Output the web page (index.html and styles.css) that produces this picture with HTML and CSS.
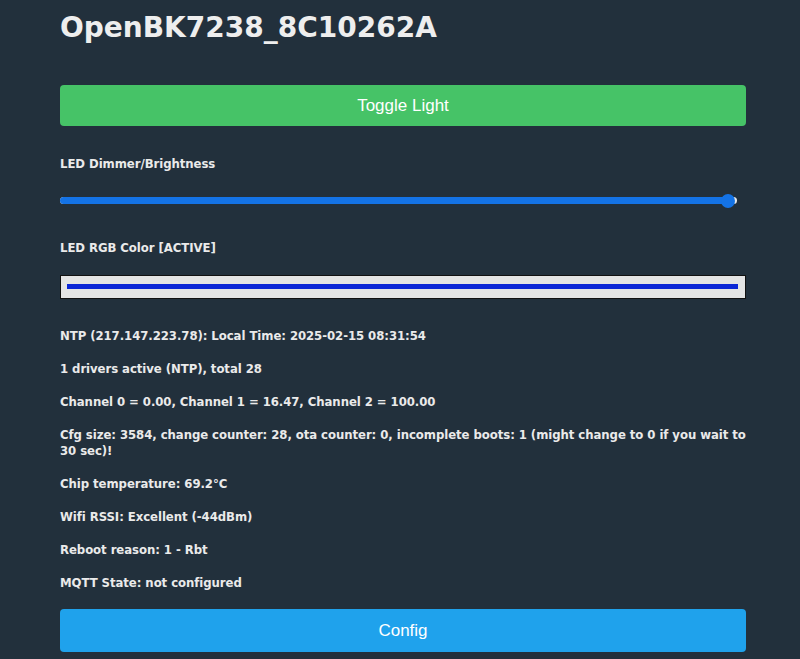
FILE: index.html
```html
<!DOCTYPE html>
<html>
<head>
<meta charset="utf-8">
<link rel="stylesheet" href="styles.css">
</head>
<body>
<div class="page">
  <h1 class="title">OpenBK7238_8C10262A</h1>
  <button class="btn btn-green">Toggle Light</button>
  <div class="label label-dim">LED Dimmer/Brightness</div>
  <div class="slider">
    <div class="track"></div>
    <div class="fill"></div>
    <div class="thumb"></div>
  </div>
  <div class="label label-rgb">LED RGB Color [ACTIVE]</div>
  <div class="colorbox"><div class="swatch"></div></div>
  <div class="info">
    <p>NTP (217.147.223.78): Local Time: 2025-02-15 08:31:54</p>
    <p>1 drivers active (NTP), total 28</p>
    <p>Channel 0 = 0.00, Channel 1 = 16.47, Channel 2 = 100.00</p>
    <p>Cfg size: 3584, change counter: 28, ota counter: 0, incomplete boots: 1 (might change to 0 if you wait to 30 sec)!</p>
    <p>Chip temperature: 69.2°C</p>
    <p>Wifi RSSI: Excellent (-44dBm)</p>
    <p>Reboot reason: 1 - Rbt</p>
    <p>MQTT State: not configured</p>
  </div>
  <button class="btn btn-blue">Config</button>
</div>
</body>
</html>
```

FILE: styles.css
```css
html, body {
  margin: 0;
  padding: 0;
  background: #22303c;
  height: 100%;
}
body {
  color: #eaeaea;
  font-family: "DejaVu Sans Condensed", "DejaVu Sans", Verdana, sans-serif;
  font-stretch: condensed;
  font-weight: bold;
  font-size: 13px;
  line-height: 16px;
  letter-spacing: -0.06px;
}
.page {
  padding: 11px 54px 0 60px;
  display: flex;
  flex-direction: column;
}
.title {
  margin: 0;
  font-family: "DejaVu Sans", Verdana, sans-serif;
  font-stretch: normal;
  font-size: 28px;
  line-height: 34px;
  font-weight: bold;
  letter-spacing: 0;
  color: #eeeeee;
}
.btn {
  display: block;
  width: 100%;
  border: 0;
  border-radius: 4px;
  color: #fff;
  font-family: "Liberation Sans", Arial, sans-serif;
  font-stretch: normal;
  font-weight: normal;
  font-size: 17px;
  letter-spacing: 0;
  padding: 0;
  text-align: center;
}
.btn-green {
  margin-top: 40px;
  height: 41px;
  background: #46c367;
}
.btn-blue {
  margin-top: 18px;
  height: 43px;
  background: #1fa2ec;
}
.label-dim { margin-top: 30px; }
.label-rgb { margin-top: 31px; }
.slider {
  position: relative;
  margin-top: 21px;
  height: 16px;
  width: 677px;
}
.track {
  position: absolute;
  left: 0;
  right: 0;
  top: 4px;
  height: 7px;
  border-radius: 4px;
  background: #e8e8e8;
}
.fill {
  position: absolute;
  left: 0;
  width: 668px;
  top: 4px;
  height: 7px;
  border-radius: 4px;
  background: #1473e6;
}
.thumb {
  position: absolute;
  left: 661px;
  top: 1px;
  width: 14px;
  height: 14px;
  border-radius: 50%;
  background: #1473e6;
}
.colorbox {
  margin-top: 19px;
  height: 24px;
  box-sizing: border-box;
  border: 1px solid #111;
  background: #e4e4e4;
  padding: 8px 7px 0 6px;
}
.swatch {
  height: 5px;
  background: #0b26d6;
}
.info {
  margin-top: 29px;
  display: flex;
  flex-direction: column;
  gap: 17px;
}
.info p {
  margin: 0;
}
```
